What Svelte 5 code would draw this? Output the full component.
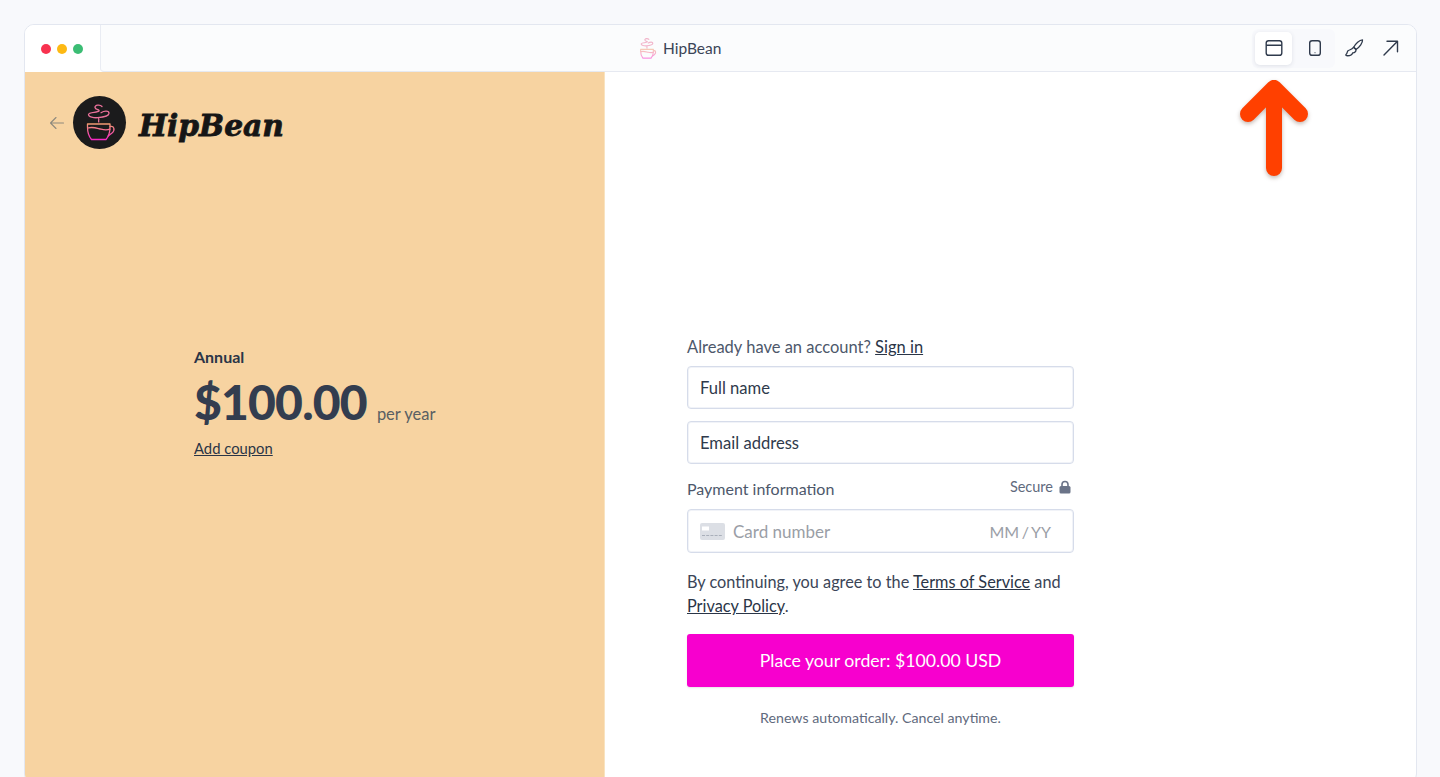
<script>
  const cupPaths = {
    steam: "M29 10.500c-2-2.500-7.500-1.500-7 1 .5 2.500 5 2 4 3.500-1.500 1.800-10.500 .8-10.500 3.500 0 2.500 5.500 3.500 9 3.200 4-.3 11.500-1.700 11.500-4.500 0-2.800-5-2.500-8-.5M25.500 22.500c1 1-.5 2 .3 3.500",
    cup: "M14.500 28h22.500v3c0 5-1 9-4 12.500h-14.500c-3-3.500-4-7.500-4-12.500z",
    wave: "M15 32c5-1.500 9 .3 13 1.200 3 .7 6.500 .8 9 0",
    handle: "M37 30.500c4-1 5.500 3.500 2 6.500l-3.800 3"
  };
</script>

{#snippet cup(cls, box)}
  <svg class={cls} viewBox={box} fill="none" stroke-linecap="round" stroke-linejoin="round" aria-hidden="true">
    <defs>
      <linearGradient id="{cls}-g" gradientUnits="userSpaceOnUse" x1="0" y1="27" x2="0" y2="44">
        <stop offset="0" stop-color="#f0a06c" />
        <stop offset="1" stop-color="#f824c8" />
      </linearGradient>
    </defs>
    <path d={cupPaths.steam} stroke="#e9719a" />
    <g stroke="url(#{cls}-g)">
      <path d={cupPaths.cup} />
      <path d={cupPaths.wave} />
      <path d={cupPaths.handle} />
    </g>
  </svg>
{/snippet}

<div class="window">
  <header class="titlebar">
    <div class="lights">
      <span class="dot red"></span><span class="dot yellow"></span><span class="dot green"></span>
    </div>
    <div class="urlbar">
      <div class="title">
        {@render cup("favicon", "12 8 31 37")}
        <span>HipBean</span>
      </div>
      <div class="tools">
        <div class="seg">
          <button class="tool active" aria-label="Desktop">
            <svg viewBox="0 0 20 20" fill="none" stroke="#2f3a4c" stroke-width="1.400"><rect x="2.200" y="2.700" width="15.600" height="14.600" rx="2.400" /><path d="M2.200 7.200h15.600" /><path d="M4.500 5h.1M6.500 5h.1" stroke-width="0.800" /></svg>
          </button>
          <button class="tool mobile" aria-label="Mobile">
            <svg viewBox="0 0 20 20" fill="none" stroke="#2f3a4c" stroke-width="1.400"><rect x="4.700" y="2.700" width="10.600" height="14.600" rx="2.400" /><path d="M9.500 14.700h1" stroke-width="0.900" /></svg>
          </button>
        </div>
        <button class="tool" aria-label="Theme">
          <svg viewBox="0 0 20 20" fill="none" stroke="#2f3a4c" stroke-width="1.300" stroke-linejoin="round"><path d="M18.500 1.800c.3 3-2.800 7.500-6.500 9.700l-2.300-2.300c1.800-3.700 5.800-7.300 8.800-7.400z" /><path d="M9.700 9.200l2.300 2.300c.3 2-1.600 3.700-3.400 3.400-.3 1.500-2.300 3-6 2.800-.8-.2-1-1-.4-1.500 1.200-.8 .6-2.200 1.800-3.400 1-1 3.700-.8 5.700-3.600z" /></svg>
        </button>
        <button class="tool" aria-label="Open">
          <svg viewBox="0 0 20 20" fill="none" stroke="#2f3a4c" stroke-width="1.400" stroke-linecap="round" stroke-linejoin="round"><path d="M3 17 16.500 3.300M6 3.300h10.500v10.500" /></svg>
        </button>
      </div>
    </div>
  </header>

  <main class="page">
    <section class="summary">
      <div class="brand">
        <svg class="back" viewBox="0 0 16 16" fill="none" stroke="#8f8a7d" stroke-width="1.100" stroke-linecap="round" stroke-linejoin="round" aria-hidden="true"><path d="M14.500 8h-13M7 2.500 1.500 8 7 13.500" /></svg>
        <div class="badge">{@render cup("logo", "0 0 53 53")}</div>
        <span class="wordmark">HipBean</span>
      </div>
      <div class="plan">
        <div class="plan-name">Annual</div>
        <div class="price"><strong>$100.00</strong><span>per year</span></div>
        <a href="#coupon" class="coupon">Add coupon</a>
      </div>
    </section>

    <section class="checkout">
      <form class="form">
        <p class="signin">Already have an account? <a href="#signin">Sign in</a></p>
        <div class="field">Full name</div>
        <div class="field">Email address</div>
        <div class="pay-head">
          <span>Payment information</span>
          <span class="secure">Secure
            <svg viewBox="0 0 12 14" aria-hidden="true"><path fill="none" stroke="#6b7488" stroke-width="1.600" d="M3 7V4.500a3 3 0 0 1 6 0V7" /><rect x="0.500" y="6" width="11" height="7.500" rx="1.500" fill="#6b7488" /></svg>
          </span>
        </div>
        <div class="field card">
          <svg class="card-icon" viewBox="0 0 25 17" aria-hidden="true"><rect width="25" height="17" rx="2" fill="#dcdfe5" /><rect x="2" y="3.500" width="7" height="4" fill="#fff" /><path d="M2 12.500h21" stroke="#a9afba" stroke-width="1.200" stroke-dasharray="3 1.200" /></svg>
          <span class="ph">Card number</span>
          <span class="ph exp">MM / YY</span>
        </div>
        <p class="terms">By continuing, you agree to the <a href="#tos">Terms of Service</a> and <a href="#privacy">Privacy Policy</a>.</p>
        <button type="button" class="submit">Place your order: $100.00 USD</button>
        <p class="renew">Renews automatically. Cancel anytime.</p>
      </form>
    </section>
  </main>

  <svg class="arrow" viewBox="0 0 72 100" fill="none" aria-hidden="true">
    <path d="M35 11v80M9 37 35 11l26 26" stroke="#ff4000" stroke-width="16" stroke-linecap="round" stroke-linejoin="round" />
  </svg>
</div>

<style>
  :global(body) {
    margin: 0;
    background: #f8f9fc;
    height: 777px;
    overflow: hidden;
    font-family: "Lato", "Liberation Sans", sans-serif;
    color: #2f3a4c;
  }
  .window {
    position: relative;
    margin: 24px 23px 0 24px;
    height: 760px;
    border: 1px solid #e3e7f0;
    border-radius: 10px;
    background: #fff;
    overflow: hidden;
    box-sizing: border-box;
  }
  .titlebar {
    display: flex;
    height: 47px;
    box-sizing: border-box;
  }
  .lights {
    width: 75px;
    flex: none;
    display: flex;
    align-items: center;
    gap: 6px;
    padding-left: 16px;
    box-sizing: border-box;
    background: #fff;
  }
  .dot { width: 10px; height: 10px; border-radius: 50%; }
  .red { background: #f8324f; }
  .yellow { background: #fdb913; }
  .green { background: #3bbd74; }
  .urlbar {
    flex: 1;
    position: relative;
    display: flex;
    align-items: center;
    justify-content: flex-end;
    background: #fbfcfd;
    border-left: 1px solid #e9ecf3;
    border-bottom: 1px solid #e6e9f1;
    border-bottom-left-radius: 4px;
    padding-right: 7px;
  }
  .title {
    position: absolute;
    left: 538px;
    top: 0;
    height: 46px;
    display: flex;
    align-items: center;
    gap: 6px;
    font-size: 15.500px;
    color: #3b4557;
  }
  .favicon { width: 18px; height: 21px; opacity: 0.5; stroke-width: 2px; }
  .tools { display: flex; align-items: center; gap: 0; }
  .seg {
    display: flex;
    background: #f8f9fc;
    border-radius: 6px;
    padding: 3px 2px 3px 3px;
  }
  .tool {
    width: 37px;
    height: 33px;
    border: 0;
    background: transparent;
    padding: 0;
    display: flex;
    align-items: center;
    justify-content: center;
    border-radius: 5px;
  }
  .mobile { margin-left: 4px; }
  .tool svg { width: 20px; height: 20px; }
  .active { background: #fff; box-shadow: 0 1px 4px rgba(40, 50, 80, 0.12); }

  .page { display: flex; height: 712px; }
  .summary {
    width: 580px;
    flex: none;
    background: #f7d3a1;
    border-right: 1px solid #f9e3c0;
    padding: 24px 0 0 24px;
    box-sizing: border-box;
  }
  .brand { display: flex; align-items: center; }
  .back { width: 16px; height: 16px; margin-right: 8px; }
  .badge {
    width: 53px;
    height: 53px;
    border-radius: 50%;
    background: #1b1b1c;
    flex: none;
  }
  .logo { display: block; width: 53px; height: 53px; stroke-width: 1.300px; }
  .wordmark {
    margin: 6px 0 0 13px;
    font-family: "DejaVu Serif", serif;
    font-weight: 700;
    font-style: italic;
    font-size: 29.700px;
    color: #161616;
    -webkit-text-stroke: 0.800px #161616;
  }
  .plan { margin: 198px 0 0 145px; }
  .plan-name { font-size: 16px; font-weight: 700; color: #2a3547; line-height: 20px; }
  .price { display: flex; align-items: baseline; gap: 10px; margin-top: 7px; height: 56px; }
  .price strong { font-size: 48px; font-weight: 900; color: #333d4f; letter-spacing: -0.800px; line-height: 56px; }
  .price span { font-size: 16.500px; color: #5a5f63; }
  .coupon { display: block; margin-top: 8px; font-size: 14.800px; color: #2a3547; line-height: 20px; }

  .checkout { flex: 1; padding: 264px 0 0 82px; box-sizing: border-box; }
  .form { width: 387px; font-size: 16px; }
  .signin { margin: 0 0 8px; line-height: 22px; color: #4d586b; font-size: 16.500px; }
  a { color: #2a3547; }
  .field {
    height: 43px;
    box-sizing: border-box;
    border: 1px solid #d6dcea;
    box-shadow: inset 0 0 0 1px #f1f3f8;
    border-radius: 4px;
    margin-bottom: 12px;
    padding: 0 12px;
    display: flex;
    align-items: center;
    color: #2f3a4c;
    font-size: 16.600px;
  }
  .pay-head {
    display: flex;
    justify-content: space-between;
    align-items: flex-start;
    height: 33px;
    line-height: 26px;
    color: #4d586b;
  }
  .secure { display: flex; align-items: center; gap: 6px; font-size: 14.500px; line-height: 22px; padding-right: 3px; color: #5f6a7d; }
  .secure svg { width: 12px; height: 14px; }
  .card { height: 44px; margin-bottom: 0; }
  .card-icon { width: 25px; height: 17px; margin-right: 8px; }
  .ph { color: #9a9ea6; font-size: 17px; }
  .exp { margin-left: auto; padding-right: 10px; font-size: 16px; word-spacing: -1.500px; }
  .terms { margin: 17px 0 16px; line-height: 24px; color: #3b4557; font-size: 16.300px; }
  .submit {
    display: block;
    width: 100%;
    height: 53px;
    border: 0;
    border-radius: 3px;
    background: #f700ce;
    color: #fff;
    font: inherit;
    font-size: 17.700px;
    box-shadow: 0 1px 2px rgba(0, 0, 0, 0.1);
  }
  .renew { margin: 21px 0 0; text-align: center; font-size: 14.200px; color: #5f6a7d; line-height: 20px; }
  .arrow {
    position: absolute;
    left: 1214px;
    top: 52px;
    width: 72px;
    height: 100px;
    overflow: visible;
    filter: drop-shadow(0 2px 2px rgba(60, 20, 0, 0.3));
  }
</style>
